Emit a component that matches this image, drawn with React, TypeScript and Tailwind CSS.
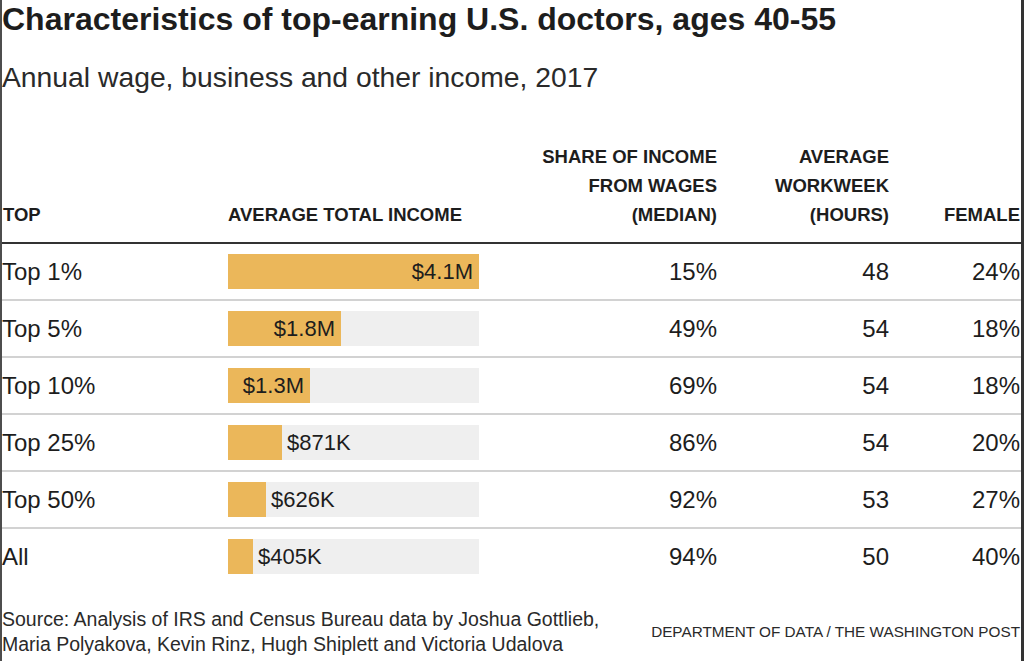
import React from 'react';

type Row = {
  label: string;
  income: string;
  bar: number;
  share: string;
  hours: string;
  female: string;
};

const rows: Row[] = [
  { label: 'Top 1%', income: '$4.1M', bar: 251, share: '15%', hours: '48', female: '24%' },
  { label: 'Top 5%', income: '$1.8M', bar: 113, share: '49%', hours: '54', female: '18%' },
  { label: 'Top 10%', income: '$1.3M', bar: 82, share: '69%', hours: '54', female: '18%' },
  { label: 'Top 25%', income: '$871K', bar: 54, share: '86%', hours: '54', female: '20%' },
  { label: 'Top 50%', income: '$626K', bar: 38, share: '92%', hours: '53', female: '27%' },
  { label: 'All', income: '$405K', bar: 25, share: '94%', hours: '50', female: '40%' },
];

const cols = 'grid grid-cols-[226px_251px_238px_172px_1fr]';

const IncomeBar = ({ row }: { row: Row }) => {
  const inside = row.bar > 75;
  return (
    <div className="flex h-[35px] w-[251px] bg-[#efefef]">
      <div
        className="flex h-full shrink-0 items-center justify-end bg-[#ebb75a] pr-[6px]"
        style={{ width: row.bar }}
      >
        {inside && <span className="text-[22px] leading-none">{row.income}</span>}
      </div>
      {!inside && <span className="ml-[5px] self-center text-[22px] leading-none">{row.income}</span>}
    </div>
  );
};

const App = () => {
  return (
    <div className="h-[661px] w-full overflow-hidden border-l-2 border-r-[3px] border-l-[#4d4d4d] border-r-[#333] bg-white font-['Liberation_Sans',Arial,sans-serif] text-[#1d1d1d]">
      <h1 className="text-[32px] font-bold leading-[38px]">
        Characteristics of top-earning U.S. doctors, ages 40-55
      </h1>
      <p className="mt-[21px] text-[28.3px] leading-[36px] text-[#2a2a2a]">
        Annual wage, business and other income, 2017
      </p>

      {/* column headers */}
      <div className={`${cols} mt-[47px] items-end border-b-2 border-[#333] pb-[13px] text-[18.5px] font-bold uppercase leading-[29px]`}>
        <div className="pl-px">Top</div>
        <div>Average total income</div>
        <div className="text-right">
          Share of income
          <br />
          from wages
          <br />
          (median)
        </div>
        <div className="text-right">
          Average
          <br />
          workweek
          <br />
          (hours)
        </div>
        <div className="pr-px text-right">Female</div>
      </div>

      {/* data rows */}
      {rows.map((row, i) => (
        <div
          key={row.label}
          className={`${cols} items-center pb-[10px] pt-[10px] text-[24px] leading-none ${
            i < rows.length - 1 ? 'border-b-2 border-[#d2d2d2]' : ''
          }`}
        >
          <div className="text-[24px]">{row.label}</div>
          <IncomeBar row={row} />
          <div className="text-right">{row.share}</div>
          <div className="text-right">{row.hours}</div>
          <div className="pr-px text-right">{row.female}</div>
        </div>
      ))}

      {/* footer */}
      <div className="mt-[23px] flex items-center justify-between pr-px">
        <p className="text-[19.5px] leading-[25px] text-[#2a2a2a]">
          Source: Analysis of IRS and Census Bureau data by Joshua Gottlieb,
          <br />
          Maria Polyakova, Kevin Rinz, Hugh Shiplett and Victoria Udalova
        </p>
        <p className="text-[15.3px] leading-none text-[#2a2a2a]">DEPARTMENT OF DATA / THE WASHINGTON POST</p>
      </div>
    </div>
  );
};

export default App;
